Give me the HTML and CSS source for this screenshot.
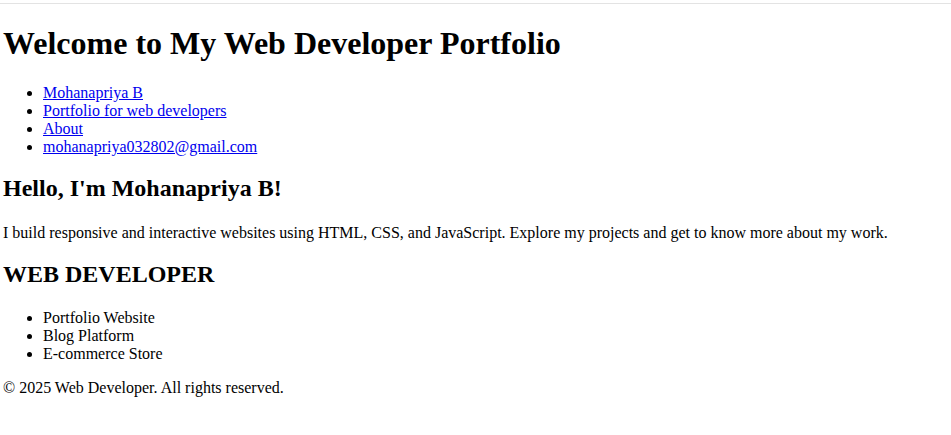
FILE: index.html
```html
<!DOCTYPE html>
<html lang="en">
<head>
<meta charset="utf-8">
<title>Web Developer Portfolio</title>
<link rel="stylesheet" href="styles.css">
</head>
<body>
<div class="topline"></div>
<main class="page">
  <header class="header">
    <h1 class="title">Welcome to My Web Developer Portfolio</h1>
    <nav>
      <ul class="list">
        <li><a href="#">Mohanapriya B</a></li>
        <li><a href="#">Portfolio for web developers</a></li>
        <li><a href="#">About</a></li>
        <li><a href="#">mohanapriya032802@gmail.com</a></li>
      </ul>
    </nav>
  </header>
  <section class="intro">
    <h2 class="heading">Hello, I'm Mohanapriya B!</h2>
    <p class="text">I build responsive and interactive websites using HTML, CSS, and JavaScript. Explore my projects and get to know more about my work.</p>
  </section>
  <section class="projects">
    <h2 class="heading">WEB DEVELOPER</h2>
    <ul class="list">
      <li>Portfolio Website</li>
      <li>Blog Platform</li>
      <li>E-commerce Store</li>
    </ul>
  </section>
  <footer class="footer">
    <p class="text">&copy; 2025 Web Developer. All rights reserved.</p>
  </footer>
</main>
</body>
</html>
```
FILE: styles.css
```css
html, body {
  margin: 0;
  padding: 0;
  background: #ffffff;
}
body {
  font-family: "Liberation Serif", "Times New Roman", serif;
  font-size: 16px;
  line-height: 18px;
  color: #000000;
}
.topline {
  height: 3px;
  border-bottom: 1px solid #e3e3e3;
}
.page {
  padding: 0 3px;
}
.title {
  font-size: 32px;
  line-height: 37px;
  font-weight: bold;
  margin: 21.44px 0;
}
.heading {
  font-size: 24px;
  line-height: 28px;
  font-weight: bold;
  margin: 18px 0 20px;
}
.projects .heading {
  margin-bottom: 21px;
}
.list {
  margin: 16px 0;
  padding-left: 40px;
  list-style: disc;
}
.list a {
  color: #0000ee;
  text-decoration: underline;
}
.text {
  margin: 16px 0;
}
.intro .text {
  margin-top: 22px;
}
```
